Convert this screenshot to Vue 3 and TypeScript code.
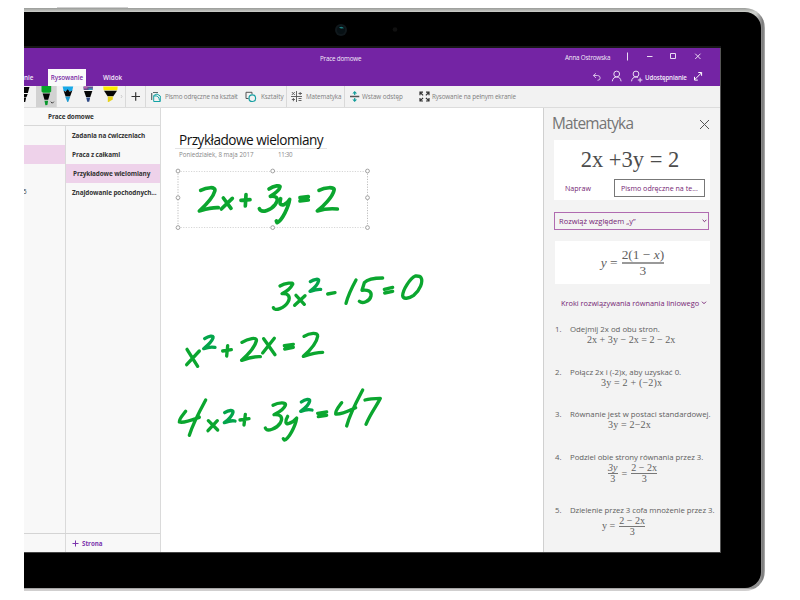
<script setup lang="ts">
interface Page { title: string; active?: boolean }
interface Step { text: string; lhs?: string; lead?: string; top?: string; bottom?: string }

const pages: Page[] = [
  { title: 'Zadania na ćwiczeniach' },
  { title: 'Praca z całkami' },
  { title: 'Przykładowe wielomiany', active: true },
  { title: 'Znajdowanie pochodnych...' },
]

const steps: Step[] = [
  { text: 'Odejmij 2x od obu stron.', lhs: '2x + 3y − 2x = 2 − 2x' },
  { text: 'Połącz 2x i (-2)x, aby uzyskać 0.', lhs: '3y = 2 + (−2)x' },
  { text: 'Równanie jest w postaci standardowej.', lhs: '3y = 2−2x' },
  { text: 'Podziel obie strony równania przez 3.', lead: '3y', top: '2 − 2x', bottom: '3' },
  { text: 'Dzielenie przez 3 cofa mnożenie przez 3.', lhs: 'y =', top: '2 − 2x', bottom: '3' },
]

const firstInk: string[] = [
  'M122 211C138 203 170 197 164 214C159 234 134 258 118 273C138 267 152 262 175 263',
  'M190 234L213 265M217 235L184 267',
  'M243 241L270 239M258 224L256 258',
  'M327 207C342 196 362 195 360 201C358 212 341 223 331 229C352 227 357 237 346 253C335 268 305 283 298 266',
  'M362 236C357 254 362 256 372 254C381 250 386 243 389 238C386 259 367 302 351 308L349 303',
  'M420 233L445 230M420 243L445 240',
  'M477 211C494 202 526 199 522 211C518 231 490 259 472 273C491 267 509 265 532 267',
]
const inkLines: string[] = [
  'M330 78C345 69 372 66 368 73C361 87 345 97 336 101C357 99 362 112 354 126C345 143 313 156 310 143',
  'M378 106L403 133M405 107L374 136',
  'M473 102L495 98',
  'M558 60C547 80 536 100 528 130',
  'M638 54C617 54 593 57 583 68L576 91C593 89 606 93 603 108C599 125 577 132 568 124',
  'M643 88L668 82M644 99L668 94',
  'M736 48C720 55 698 90 698 107C699 119 717 116 731 106C750 91 760 65 753 53C749 47 743 48 736 48',
  'M51 268L83 319M88 273L50 314',
  'M158 273L184 269M173 257L170 288',
  'M216 247C233 236 263 229 259 243C254 264 234 284 215 301C233 294 249 289 271 290',
  'M281 236L315 284M313 235L278 279',
  'M343 257L370 253M344 267L370 262',
  'M402 229C419 218 445 216 443 229C440 251 416 275 400 289C421 282 437 277 458 277',
  'M47 454C38 466 27 477 28 486C43 490 69 479 88 472M107 420C89 453 69 490 58 526',
  'M115 482L143 510M142 482L114 512',
  'M210 480L237 476M226 463L222 495',
  'M309 436C326 427 350 426 346 436C341 450 321 459 312 464C333 462 340 473 331 489C320 506 291 517 286 504',
  'M353 469C344 484 347 493 355 491C365 489 375 480 380 474C377 497 356 538 343 540L340 536',
  'M443 460L470 456M445 470L470 466',
  'M515 428C506 440 495 453 497 462C515 464 539 451 557 443M578 390C561 422 540 460 530 498',
  'M585 420C600 415 617 415 631 415C620 438 604 456 588 493',
]
const superscripts: string[] = [
  'M421 65C433 57 448 55 446 62C443 75 431 86 420 94C432 90 441 87 452 88',
  'M104 236C116 228 132 225 129 234C125 246 112 257 101 266C114 261 124 260 135 262',
  'M164 458C176 450 191 449 189 457C186 470 174 480 163 488C176 483 187 481 195 483',
  'M394 426C406 417 421 415 419 423C416 436 404 446 392 454C405 449 414 447 426 450',
]
const handles: [number, number][] = [
  [178, 171], [272.7, 171], [367.5, 171], [178, 197.7], [367.5, 197.7], [178, 227.6], [272.7, 227.6], [367.5, 227.6],
]
</script>

<template>
  <div class="stage">
    <div class="pen-edge"></div>
    <div class="tablet">
      <div class="bezel">
        <div class="camera-bar">
          <svg width="736" height="36" viewBox="24 12 736 36">
            <circle cx="341" cy="30" r="6" fill="#10181c" />
            <circle cx="341" cy="30" r="4" fill="#071014" />
            <path d="M339 27.500q3-2 5 .8l-3 .3z" fill="#1d7f80" />
            <circle cx="395" cy="29.500" r="2.300" fill="#101010" />
          </svg>
        </div>
        <div class="screen">
          <header class="title">
            <div class="caption">
              <span class="doc">Prace domowe</span>
              <span class="user">Anna Ostrowska</span>
              <svg width="84" height="18" viewBox="622 48 84 18" fill="none" stroke="#eadcf3">
                <path d="M627.500 52.500v8" />
                <path d="M647 56.500h5.500M670.500 53.500h5v5h-5zM695.200 53.700l5.300 5.300M700.500 53.700l-5.300 5.300" />
              </svg>
            </div>
            <div class="ribbon">
              <span class="tab cut">nie</span>
              <span class="tab active">Rysowanie</span>
              <span class="tab view">Widok</span>
              <span class="grow"></span>
              <svg class="acts" width="52" height="17" viewBox="592 69 52 17" fill="none" stroke="#eadcf3">
                <path stroke-width=".8" d="M597 73.300l-2.700 2.200 2.700 2.400M594.500 75.500h4.200q2.500.2 2.500 2.500t-2.700 2.300" />
                <circle cx="617.700" cy="74" r="2.900" /><path d="M613.300 81.300q.7-4.300 4.400-4.300t4.400 4.300" />
                <circle cx="637" cy="74" r="2.900" /><path d="M632.500 81.300q.7-4.300 4.500-4.300 1.200 0 2 .5M638.800 80h4.600M641.100 77.700v4.600" />
              </svg>
              <span class="share">Udostępnianie</span>
              <svg class="expand" width="12" height="17" viewBox="692 69 12 17" fill="none" stroke="#fff">
                <path d="M694.500 79.800l7-7M698.300 72.500h3.300v3.300M694.500 76.800v3.300h3.300" />
              </svg>
            </div>
          </header>

          <div class="tools">
            <svg width="140" height="21" viewBox="24 86 140 21">
              <path d="M36 86h20.700v21H36z" fill="#d2d2d2" />
              <path d="M24 87h5.500l-1.600 6H24zM24 94h3.700l-1.200 3H24zM24 97.500h2.200l-1 4.500H24z" fill="#050505" />
              <path d="M41.500 86h9.700v5.600l-1.500 1.200h-6.800l-1.400-1.200z" fill="#08a52a" />
              <path d="M42.700 93.500h7.300l-1.800 6.200h-3.700z" fill="#050505" /><path d="M44.500 100.800h3.600l-.7 4.200-2 .3z" fill="#08972c" />
              <path d="M50.800 101.700l1.500 1.500 1.500-1.500" fill="none" stroke="#333" />
              <path d="M62.600 86.500h10.600l-1 4.600h-8.500z" fill="#18a9e8" />
              <path d="M63.500 90.500l2 1.200 2.200-2.500 2 2.500 2.600-1.200-2.200 6h-4.500z" fill="#050505" /><path d="M65.300 96.700h5l-2.100 5.200h-.9z" fill="#1d9bd2" />
              <path d="M83.300 86.500h9.800l-.5 3.600h-8.900z" fill="#62518e" /><path d="M84 86.500h4l-1 2h-3z" fill="#b75caa" /><path d="M88.500 88.500h4l-.3 1.600h-3.500z" fill="#35a0be" />
              <path d="M84 91h8.300l-2 6h-4.200z" fill="#050505" /><path d="M86.200 97.500h4l-1 4.300h-2z" fill="#304a86" />
              <path d="M103.200 86.500h14.500l-.4 3.700h-13.700z" fill="#fde900" /><path d="M104 90.800h13l-3.700 5.400h-5.700z" fill="#050505" /><path d="M107.800 96.600h5v2.800l-4.200 2.700h-.8z" fill="#e6d219" />
              <path d="M121 95l1 1.500-1 1.500" fill="none" stroke="#bbb" stroke-width=".7" />
              <path d="M125.500 86v21M145.500 86v21" stroke="#d9d9d9" />
              <path d="M131.500 96.500h8.500M135.700 92.300v8.500" stroke="#333" stroke-width="1.200" />
              <path d="M151.700 93v7M153 92.500h5" fill="none" stroke="#59696a" stroke-width="1.200" />
              <path d="M153.700 95.500l3.300-1.500 3.300 2v5.500h-6.600z" fill="none" stroke="#14a3a5" />
              <path d="M154 96q5-1 5.500 4.500" fill="none" stroke="#14a3a5" />
            </svg>
            <span class="tool t1">Pismo odręczne na kształt</span>
            <svg width="14" height="21" viewBox="243.500 86 14 21" fill="none"><path d="M249 98.500h-2.500v-6.200h6v2" stroke="#555" /><circle cx="252.800" cy="98.200" r="3.300" stroke="#159fa2" stroke-width="1.200" /></svg>
            <span class="tool t2">Kształty</span>
            <svg width="20" height="21" viewBox="286 86 20 21" fill="none" stroke="#555"><path d="M286.500 86v21" stroke="#d9d9d9" /><path d="M296.500 91v11M291 96.500h11M291.800 92l3 3M294.800 92l-3 3M298.500 93.500h3.500M300.200 92v3M291.800 99.500h3.200M293.400 98v3.200M298.500 98.500h3M298.500 100.500h3" stroke-width=".9" /></svg>
            <span class="tool t3">Matematyka</span>
            <svg width="18" height="21" viewBox="344 86 18 21" fill="none"><path d="M344.500 86v21" stroke="#d9d9d9" /><path d="M350 96.500h9.300" stroke="#555" stroke-width="1.300" /><path d="M354.700 95v-3M354.700 98v3" stroke="#129d9a" stroke-width="1.200" /><path d="M352.300 93.500l2.400-2.500 2.400 2.500zM352.300 99.500l2.400 2.500 2.400-2.500z" fill="#129d9a" /></svg>
            <span class="tool t4">Wstaw odstęp</span>
            <svg width="14" height="21" viewBox="418 86 14 21" fill="none" stroke="#333" stroke-width="1.200"><path d="M420 95.200v-3h3M420.300 92.500l2.800 2.800M426 92.200h3v3M428.700 92.500l-2.800 2.800M420 98v3h3M420.300 100.700l2.800-2.800M426 101h3v-3M428.700 100.700l-2.800-2.800" /></svg>
            <span class="tool t5">Rysowanie na pełnym ekranie</span>
          </div>

          <div class="work">
            <aside class="nav">
              <div class="nav-head"><span>Prace domowe</span></div>
              <div class="lists">
                <div class="sections"><div class="section"></div><div class="section on"></div><div class="section"></div><div class="section"><span>5</span></div></div>
                <div class="pages">
                  <div v-for="p in pages" :key="p.title" class="page" :class="{ on: p.active }"><span>{{ p.title }}</span></div>
                </div>
              </div>
              <div class="nav-foot">
                <div class="blank"></div>
                <div class="add">
                  <svg width="7" height="7" viewBox="0 0 7 7" stroke="#7b35ad" fill="none"><path d="M.5 3.500h6M3.500.5v6" /></svg>
                  <span>Strona</span>
                </div>
              </div>
            </aside>

            <main class="canvas">
              <h1><span>Przykładowe wielomiany</span></h1>
              <div class="meta"><span class="date">Poniedziałek, 8 maja 2017</span><span class="time">11:30</span></div>
              <svg class="ink" width="382" height="444" viewBox="161 108 382 444" fill="none">
                <g stroke="#bdbdbd" stroke-dasharray="1.200 1.400"><path d="M178 171.500H367.500M178 227.500H367.500" stroke="#d6d6d6" /><path d="M178 171V228M367.500 171V228" /></g>
                <circle v-for="(h, i) in handles" :key="i" :cx="h[0]" :cy="h[1]" r="1.900" fill="#fff" stroke="#999" stroke-width=".9" />
                <g stroke="#0ba62f" stroke-linecap="round" stroke-linejoin="round">
                  <g transform="translate(160 120) scale(.33333)" stroke-width="11"><path v-for="d in firstInk" :key="d" :d="d" /></g>
                  <g transform="translate(170 260) scale(.33333)" stroke-width="10">
                    <path v-for="d in inkLines" :key="d" :d="d" />
                    <path v-for="d in superscripts" :key="d" :d="d" stroke="#03a54b" />
                  </g>
                </g>
              </svg>
            </main>

            <aside class="math">
              <div class="math-head">
                <h2>Matematyka</h2>
                <svg width="11" height="11" viewBox="0 0 11 11" stroke="#555" fill="none"><path d="M1 1l9 9M10 1l-9 9" /></svg>
              </div>
              <section class="card source">
                <div class="formula"><span>2x +3y = 2</span></div>
                <div class="choices"><span class="fix">Napraw</span><span class="btn"><span>Pismo odręczne na te...</span></span></div>
              </section>
              <div class="select">
                <span>Rozwiąż względem „y”</span>
                <svg width="5" height="4" viewBox="0 0 5 4" stroke="#7a2a78" fill="none"><path d="M.6.8l1.900 1.900L4.400.8" /></svg>
              </div>
              <section class="card result">
                <span class="eq"><i>y</i> =</span>
                <span class="frac"><span>2(1 − <i>x</i>)</span><span>3</span></span>
              </section>
              <div class="steps-head">
                <span>Kroki rozwiązywania równania liniowego</span>
                <svg width="6" height="4" viewBox="0 0 6 4" stroke="#7a2a78" fill="none"><path d="M1 .7l2 2L5 .7" /></svg>
              </div>
              <ol class="steps">
                <li v-for="(s, i) in steps" :key="i" :class="'s' + (i + 1)">
                  <span class="num">{{ i + 1 }}.</span>
                  <div class="body">
                    <div class="say"><span>{{ s.text }}</span></div>
                    <div class="calc">
                      <template v-if="s.lead">
                        <span class="frac small"><span><i>{{ s.lead }}</i></span><span>3</span></span>
                        <span>=</span>
                      </template>
                      <span v-if="s.lhs">{{ s.lhs }}</span>
                      <span v-if="s.top" class="frac small"><span>{{ s.top }}</span><span>{{ s.bottom }}</span></span>
                    </div>
                  </div>
                </li>
              </ol>
            </aside>
          </div>
        </div>
      </div>
    </div>
  </div>
</template>

<style>
body { background: #fff; }
</style>

<style scoped>
* { box-sizing: border-box; }
.stage { width: 800px; height: 600px; padding: 7px 0 0 24px; background: #fff; overflow: hidden; font-family: "Open Sans", "Noto Sans", sans-serif; white-space: nowrap; }
.pen-edge { width: 71px; height: 1px; margin-left: 33px; background: #d0d0d0; }
.tablet { width: 741px; height: 583px; padding: 4px 4px 3px 0; border-radius: 0 20px 20px 0; background: linear-gradient(90deg, transparent 732px, #8f8f8f 737px, #777 739px, #b5b5b5 741px), linear-gradient(#999b98, #cdcfcb 4px, #aaa 30px, #aaa 560px, #8f8f8f 580px, #e6e3e3 582px, #bbb); }
.bezel { height: 576px; background: #000; border-radius: 0 16px 16px 0; overflow: hidden; }
.camera-bar { height: 36px; width: 697px; border-bottom: 2px solid #171717; }
.camera-bar svg { display: block; }
.screen { width: 697px; height: 505px; border-right: 1px solid #555; border-bottom: 1px solid #444; background: #fff; display: flex; flex-direction: column; }
svg { display: block; flex: none; }
span { flex: none; }

.title { height: 38px; background: #7424a4; color: #f3eaf8; font-size: 6.3px; }
.caption { height: 18px; display: flex; align-items: center; letter-spacing: -.2px; }
.doc { width: 245px; margin-left: 296px; padding-top: 3px; }
.user { width: 57px; }
.ribbon { height: 20px; display: flex; }
.tab { font-weight: 600; line-height: 17px; margin-top: 3px; height: 17px; }
.cut { width: 24px; }
.active { width: 38px; text-align: center; background: #fafafa; color: #7a2ba5; }
.view { margin-left: 17px; }
.grow { flex: 1; }
.acts { margin-top: 3px; }
.share { width: 48px; padding-left: 2px; line-height: 17px; margin-top: 3px; font-weight: 600; font-size: 6.200px; letter-spacing: -.14px; }
.expand { margin: 3px 16px 0 1px; }

.tools { height: 22px; background: #f2f2f2; border-bottom: 1px solid #dcdcdc; display: flex; font-size: 6.3px; color: #808080; line-height: 21px; }
.t1 { width: 79px; padding-left: 1px; letter-spacing: -.14px; }
.t2 { width: 29px; padding-left: 4px; }
.t3 { width: 38px; padding-left: 0; letter-spacing: -.1px; }
.t4 { width: 56px; letter-spacing: -.05px; }
.t5 { letter-spacing: -.12px; }

.work { flex: 1; display: flex; min-height: 0; }
.nav { width: 137px; background: #f8f8f8; border-right: 1px solid #dadada; display: flex; flex-direction: column; font-size: 6.4px; font-weight: 700; color: #333; }
.nav-head { height: 18px; line-height: 17px; border-bottom: 1px solid #d8d8d8; padding-left: 24px; letter-spacing: -.1px; }
.lists { flex: 1; display: flex; }
.sections { width: 42px; border-right: 1px solid #dadada; }
.section { height: 19px; line-height: 18px; overflow: hidden; }
.section span { font-weight: 400; margin-left: -1px; }
.section.on, .page.on { background: #eed2ea; }
.pages { flex: 1; letter-spacing: -.1px; }
.page { height: 19px; line-height: 19px; padding-left: 6px; }
.page.on { padding-left: 7px; }
.nav-foot { height: 19px; border-top: 1px solid #d4d4d4; display: flex; }
.blank { width: 42px; border-right: 1px solid #dadada; }
.add { display: flex; align-items: center; gap: 3px; padding-left: 6px; color: #7b35ad; font-size: 6.2px; }

.canvas { width: 382px; position: relative; padding: 22px 0 0 14px; }
h1 { margin: 0; width: 152px; height: 19px; border-bottom: 1px solid #e4e4e4; padding-left: 4px; font: 400 13.6px/20px "Open Sans", sans-serif; letter-spacing: -.5px; color: #111; }
.meta { display: flex; padding-left: 4px; font-size: 6.2px; line-height: 12px; color: #888; }
.date { width: 99px; }
.time { letter-spacing: -.3px; }
.ink { position: absolute; left: 0; top: 0; }

.math { width: 177px; background: #f3f3f3; border-left: 1px solid #d0d0d0; padding: 6px 10px 0 8px; color: #606060; }
.math-head { display: flex; justify-content: space-between; align-items: center; height: 21px; }
h2 { margin: -1px 0 0; font: 400 15.4px/20px "Open Sans", sans-serif; letter-spacing: -.8px; color: #757575; }
.card { background: #fff; margin-left: 2px; }
.source { margin-top: 5px; height: 60px; }
.formula { height: 39px; line-height: 40px; padding-right: 4px; text-align: center; font-family: "Liberation Serif", serif; font-size: 22.500px; color: #4c4c4c; }
.choices { display: flex; align-items: center; justify-content: space-between; padding: 0 5px 0 11px; font-size: 7.100px; color: #752574; }
.btn { width: 91px; height: 18px; border: 1px solid #777; line-height: 16px; padding-left: 6px; }
.select { margin: 12px 0 0 2px; width: 155px; height: 18px; border: 1px solid #b06bb0; display: flex; align-items: center; justify-content: space-between; padding: 0 1px 0 4px; font-size: 7.500px; color: #752574; }
.result { margin-top: 11px; margin-left: 3px; height: 43px; display: flex; justify-content: center; align-items: center; gap: 4px; font: 13.400px "Liberation Serif", serif; }
.frac { display: inline-flex; flex-direction: column; align-items: center; }
.frac > span:first-child { border-bottom: 1px solid #777; line-height: 15px; }
.frac > span:last-child { line-height: 14px; }
.result .frac > span:first-child { border-bottom-width: 2px; border-color: #999; }
.steps-head { display: flex; align-items: center; gap: 2px; margin: 12px 0 0 9px; height: 13px; font-size: 7.400px; letter-spacing: -.02px; color: #752574; }
.steps { list-style: none; margin: 15px 0 0 3px; padding: 0; font-size: 7.800px; }
.steps li { display: flex; height: 42.700px; line-height: 11px; }
.steps li.s4 { height: 52.500px; }
.num { width: 15px; }
.say { height: 11px; }
.s4 .say, .s5 .say { letter-spacing: -.06px; }
.calc { display: flex; align-items: center; gap: 4px; font: 10.100px/10px "Liberation Serif", serif; }
.s1 .calc { padding-left: 17px; }
.s2 .calc { padding-left: 31px; letter-spacing: .15px; }
.s3 .calc { padding-left: 38px; letter-spacing: .15px; }
.s4 .calc { padding-left: 38px; }
.s5 .calc { padding-left: 32px; }
.small > span:first-child { line-height: 10px; }
.small > span:last-child { line-height: 10px; }
</style>
